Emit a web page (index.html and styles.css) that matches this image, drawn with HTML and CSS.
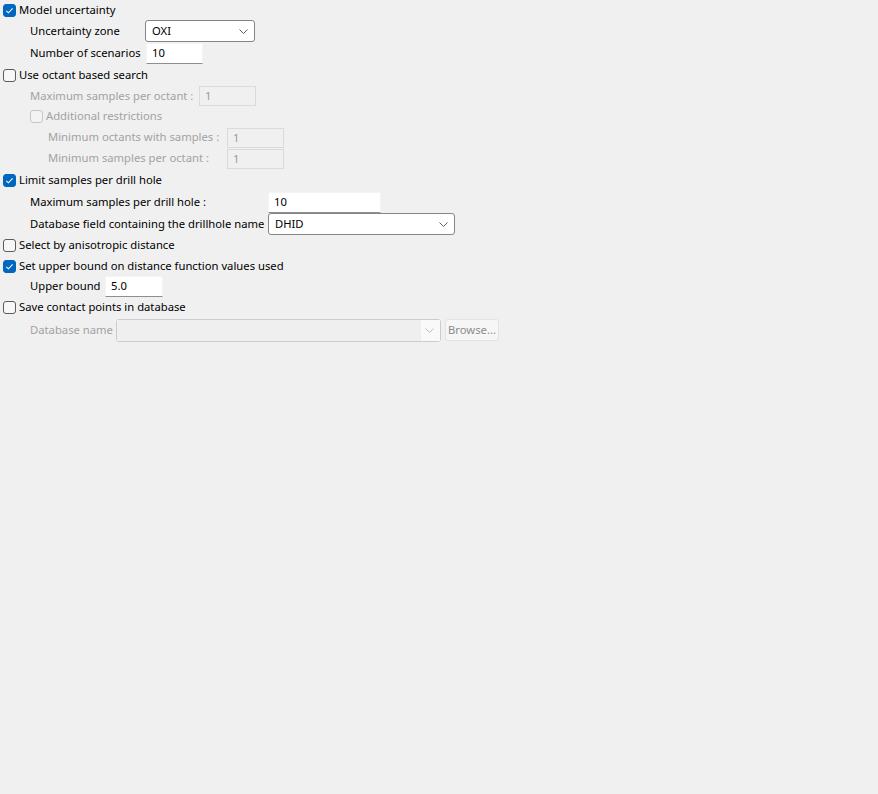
FILE: index.html
```html
<!DOCTYPE html>
<html>
<head>
<meta charset="utf-8">
<link rel="stylesheet" href="styles.css">
</head>
<body>
<div class="panel">
  <div class="row h20">
    <span class="cb checked"><svg viewBox="0 0 13 13"><path d="M3.3 6.8 L5.4 8.8 L9.6 4.4"/></svg></span>
    <span class="lbl">Model uncertainty</span>
  </div>
  <div class="row h22 ind1">
    <span class="field-label w115">Uncertainty zone</span>
    <div class="combo w110"><span class="combo-text">OXI</span><svg class="chev" viewBox="0 0 9 5"><path d="M0.5 0.5 L4.5 4.5 L8.5 0.5"/></svg></div>
  </div>
  <div class="row h22 ind1">
    <span class="field-label w116">Number of scenarios</span>
    <div class="input w57">10</div>
  </div>
  <div class="row h22">
    <span class="cb"></span>
    <span class="lbl">Use octant based search</span>
  </div>
  <div class="row h20 ind1">
    <span class="field-label w169 dis">Maximum samples per octant :</span>
    <div class="input dis w57">1</div>
  </div>
  <div class="row h21 ind1">
    <span class="cb dis"></span>
    <span class="lbl dis">Additional restrictions</span>
  </div>
  <div class="row h21 ind2">
    <span class="field-label w179 dis">Minimum octants with samples :</span>
    <div class="input dis w57">1</div>
  </div>
  <div class="row h21 ind2">
    <span class="field-label w179 dis">Minimum samples per octant :</span>
    <div class="input dis w57">1</div>
  </div>
  <div class="row h22">
    <span class="cb checked"><svg viewBox="0 0 13 13"><path d="M3.3 6.8 L5.4 8.8 L9.6 4.4"/></svg></span>
    <span class="lbl">Limit samples per drill hole</span>
  </div>
  <div class="row h22 ind1">
    <span class="field-label w238">Maximum samples per drill hole :</span>
    <div class="input w113">10</div>
  </div>
  <div class="row h22 ind1">
    <span class="field-label w238">Database field containing the drillhole name</span>
    <div class="combo w187"><span class="combo-text">DHID</span><svg class="chev" viewBox="0 0 9 5"><path d="M0.5 0.5 L4.5 4.5 L8.5 0.5"/></svg></div>
  </div>
  <div class="row h21">
    <span class="cb"></span>
    <span class="lbl">Select by anisotropic distance</span>
  </div>
  <div class="row h20">
    <span class="cb checked"><svg viewBox="0 0 13 13"><path d="M3.3 6.8 L5.4 8.8 L9.6 4.4"/></svg></span>
    <span class="lbl">Set upper bound on distance function values used</span>
  </div>
  <div class="row h21 ind1">
    <span class="field-label w75">Upper bound</span>
    <div class="input w58">5.0</div>
  </div>
  <div class="row h21">
    <span class="cb"></span>
    <span class="lbl">Save contact points in database</span>
  </div>
  <div class="row h24 ind1">
    <span class="field-label w86 dis">Database name</span>
    <div class="combo dis w325"><span class="combo-text"></span><span class="combo-btn"><svg class="chev" viewBox="0 0 9 5"><path d="M0.5 0.5 L4.5 4.5 L8.5 0.5"/></svg></span></div>
    <div class="btn dis">Browse...</div>
  </div>
</div>
</body>
</html>
```

FILE: styles.css
```css
html, body {
  margin: 0;
  padding: 0;
  background: #f0f0f0;
  width: 878px;
  height: 794px;
  overflow: hidden;
}

.panel {
  display: flex;
  flex-direction: column;
  padding-left: 3px;
  font-family: "Noto Sans", "Open Sans", sans-serif;
  font-size: 11.25px;
  color: #000;
}

.row {
  display: flex;
  align-items: center;
  white-space: nowrap;
}

.h20 { height: 20px; }
.h21 { height: 21px; }
.h22 { height: 22px; }
.h24 { height: 24px; }

.ind1 { padding-left: 27px; }
.ind2 { padding-left: 45px; }

.cb {
  width: 13px;
  height: 13px;
  box-sizing: border-box;
  border: 1px solid #5c5c5c;
  border-radius: 3px;
  background: #f7f7f7;
  margin-right: 3px;
  flex: none;
  display: flex;
}

.cb svg {
  width: 13px;
  height: 13px;
  margin: -1px;
}

.cb svg path {
  fill: none;
  stroke: #fff;
  stroke-width: 1.1;
}

.cb.checked {
  background: #0067c0;
  border-color: #0067c0;
}

.cb.dis {
  border-color: #c6c6c6;
  background: #f3f3f3;
}

.lbl, .field-label {
  padding-bottom: 2px;
}

.lbl.dis, .field-label.dis {
  color: #a2a2a2;
}

.field-label { flex: none; }
.w75 { width: 75px; }
.w86 { width: 86px; }
.w115 { width: 115px; }
.w116 { width: 116px; }
.w169 { width: 169px; }
.w179 { width: 179px; }
.w238 { width: 238px; }

.input {
  box-sizing: border-box;
  height: 21px;
  background: #fff;
  border: 1px solid #f4f4f4;
  border-bottom: 1px solid #8e8e8e;
  padding-left: 5px;
  line-height: 18px;
  flex: none;
}

.input.dis {
  height: 20px;
  background: #f0f0f0;
  border: 1px solid #dadada;
  color: #9a9a9a;
  line-height: 17px;
}

.w57 { width: 57px; }
.w58 { width: 58px; }
.w113 { width: 113px; }

.combo {
  box-sizing: border-box;
  height: 22px;
  background: #fff;
  border: 1px solid #858585;
  border-radius: 3px;
  display: flex;
  align-items: center;
  padding-left: 6px;
  flex: none;
}

.combo-text { flex: 1; padding-bottom: 1px; }

.chev {
  width: 9px;
  height: 5px;
  margin-right: 6px;
  flex: none;
}

.chev path {
  fill: none;
  stroke: #606060;
  stroke-width: 1;
}

.combo.dis {
  height: 23px;
  background: #f0f0f0;
  border-color: #cccccc;
  padding-left: 0;
  align-items: stretch;
}

.combo.dis .combo-text {
  background: #efefef;
}

.combo-btn {
  width: 19px;
  background: #f9f9f9;
  display: flex;
  align-items: center;
}

.combo-btn .chev { margin-right: 0; margin-left: 4px; }
.combo-btn .chev path { stroke: #bdbdbd; }

.combo.w110 { width: 110px; }
.combo.w187 { width: 187px; }
.combo.w325 { width: 325px; }

.btn {
  box-sizing: border-box;
  height: 22px;
  width: 54px;
  margin-left: 4px;
  padding-bottom: 1px;
  border: 1px solid #e3e3e3;
  border-radius: 3px;
  background: #f6f6f6;
  color: #8c8c8c;
  display: flex;
  align-items: center;
  justify-content: center;
  flex: none;
}
```
